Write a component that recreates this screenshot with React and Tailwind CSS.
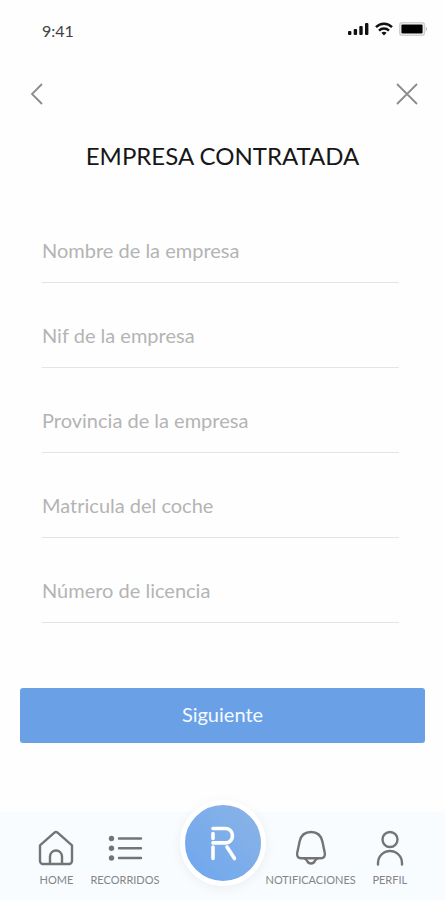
import React, { useState } from 'react';

const FIELDS = [
  { name: 'nombre', label: 'Nombre de la empresa' },
  { name: 'nif', label: 'Nif de la empresa' },
  { name: 'provincia', label: 'Provincia de la empresa' },
  { name: 'matricula', label: 'Matricula del coche' },
  { name: 'licencia', label: 'Número de licencia' },
];

function StatusBar() {
  return (
    <div className="flex h-[62px] items-center justify-between pr-[17px] pl-[42px]">
      <span className="text-base text-neutral-700">9:41</span>
      <div className="flex items-center gap-[6px] pb-1">
        {/* Signal */}
        <svg width="21" height="14" viewBox="0 0 21 14" fill="#111">
          <rect x="0" y="9" width="3.4" height="4" rx="1" />
          <rect x="5.7" y="7" width="3.4" height="6" rx="1" />
          <rect x="11.3" y="4" width="3.4" height="9" rx="1" />
          <rect x="17" y="1" width="3.4" height="12" rx="1" />
        </svg>
        {/* Wifi */}
        <svg width="18" height="14" viewBox="0 0 18 14" fill="none" stroke="#111" strokeWidth="2.4">
          <path d="M1 5.2C5.4 .6 12.6 .6 17 5.2" />
          <path d="M4 8.6c2.8-2.8 7.2-2.8 10 0" />
          <path d="M6.4 10.8c1.5-1.4 3.7-1.4 5.2 0L9 13.4z" fill="#111" stroke="none" />
        </svg>
        {/* Battery */}
        <svg width="29" height="14" viewBox="0 0 29 14">
          <rect x=".8" y=".8" width="24.6" height="12.4" rx="2.5" fill="#fff" stroke="#d0d0d0" strokeWidth="1.6" />
          <rect x="2.4" y="2.6" width="21.2" height="8.8" rx="1" fill="#000" />
          <path d="M26.8 4.8c1.6.6 1.6 3.8 0 4.4z" fill="#bdbdbd" />
        </svg>
      </div>
    </div>
  );
}

function HomeIcon() {
  return (
    <svg width="36" height="36" viewBox="0 0 36 36" fill="none" stroke="#747474" strokeWidth="2.4" strokeLinejoin="round">
      <path d="M2 15.4 16.4 2.6a2.4 2.4 0 0 1 3.2 0L34 15.4V31a3 3 0 0 1-3 3H5a3 3 0 0 1-3-3z" />
      <path d="M12 34v-7.5a6 6 0 0 1 12 0V34" />
    </svg>
  );
}

function ListIcon() {
  return (
    <svg width="36" height="36" viewBox="0 0 36 36" fill="#747474" stroke="#747474" strokeLinecap="round">
      <path d="M12 8.5h22M12 18.3h22M12 28h22" strokeWidth="2.4" />
      <circle cx="4.5" cy="8.5" r="2.7" stroke="none" />
      <circle cx="4.5" cy="18.3" r="2.7" stroke="none" />
      <circle cx="4.5" cy="28" r="2.7" stroke="none" />
    </svg>
  );
}

function BellIcon() {
  return (
    <svg width="36" height="36" viewBox="0 0 36 36" fill="none" stroke="#747474" strokeWidth="2.4" strokeLinejoin="round">
      <path d="M18 2C11.5 2 7.8 6 6.6 11.5L4.2 23C3.6 26 5 28.2 8 28.2h20c3 0 4.400-2.200 3.800-5.200L29.400 11.500C28.200 6 24.500 2 18 2z" />
      <path d="M11 28.200c2 .4 2.600 1.400 3.200 2.800 1.500 3.400 6.100 3.400 7.600 0 .6-1.400 1.200-2.400 3.200-2.800" />
    </svg>
  );
}

function ProfileIcon() {
  return (
    <svg width="36" height="36" viewBox="0 0 36 36" fill="none" stroke="#747474" strokeWidth="2.4" strokeLinecap="round">
      <circle cx="18" cy="9.5" r="7.5" />
      <path d="M6 34.5v-1.5a12 12 0 0 1 24 0v1.5" />
    </svg>
  );
}

function NavItem({ label, children }) {
  return (
    <a href="#" className="flex flex-col items-center gap-[6px] text-[11px] leading-4 text-[#858585]">
      {children}
      {label}
    </a>
  );
}

function BottomNav() {
  return (
    <nav className="mt-auto grid h-[88px] grid-cols-[1fr_86px_1fr] bg-[#f8fcff]">
      <div className="flex justify-end gap-4 pt-[18px] pr-5">
        <NavItem label="HOME"><HomeIcon /></NavItem>
        <NavItem label="RECORRIDOS"><ListIcon /></NavItem>
      </div>
      <button
        aria-label="R"
        className="-mt-3 flex size-[86px] items-center justify-center rounded-full border-[5px] border-white bg-linear-to-bl from-[#8db4e5] to-[#6ba6ef] bg-origin-border shadow-[0_2px_12px_rgba(0,0,0,0.06)]"
      >
        <svg width="28" height="36" viewBox="0 0 28 36" fill="none" stroke="#fff" strokeWidth="3.6" strokeLinecap="round">
          <path d="M4 3.5h13a6.5 7.2 0 0 1 0 14.4H4" />
          <path d="M4 8.5v5M4 22v11.5M18 22l7.500 11.500" />
        </svg>
      </button>
      <div className="flex gap-4 pt-[18px]">
        <NavItem label="NOTIFICACIONES"><BellIcon /></NavItem>
        <NavItem label="PERFIL"><ProfileIcon /></NavItem>
      </div>
    </nav>
  );
}

export default function App() {
  const [values, setValues] = useState({});

  const handleChange = (e) => {
    setValues({ ...values, [e.target.name]: e.target.value });
  };

  return (
    <div className="flex min-h-screen flex-col bg-[#fefefe] font-[Lato,sans-serif]">
      <StatusBar />

      {/* Header */}
      <header className="flex h-16 items-center justify-between px-[26px]">
        <button aria-label="Volver">
          <svg width="22" height="24" viewBox="0 0 22 24" fill="none" stroke="#8c8c8c" strokeWidth="1.8">
            <path d="M16 2 6 12l10 10" />
          </svg>
        </button>
        <button aria-label="Cerrar">
          <svg width="24" height="24" viewBox="0 0 24 24" fill="none" stroke="#8c8c8c" strokeWidth="1.8">
            <path d="M2 2l20 20M22 2 2 22" />
          </svg>
        </button>
      </header>

      <main>
        <h1 className="pt-4 text-center text-2xl leading-7 text-neutral-900">EMPRESA CONTRATADA</h1>

        <form onSubmit={(e) => e.preventDefault()}>
          <div className="mt-[28px] pr-[46px] pl-[42px]">
            {FIELDS.map(({ name, label }) => (
              <input
                key={name}
                name={name}
                aria-label={label}
                placeholder={label}
                value={values[name] || ''}
                onChange={handleChange}
                className="block h-[85px] w-full border-b border-[#e4e4e4] pt-5 text-xl text-neutral-700 placeholder:text-[#b4b4b4] focus:outline-none"
              />
            ))}
          </div>

          <div className="mt-[65px] mb-8 px-5">
            <button type="submit" className="h-[55px] w-full rounded-[3px] bg-[#6aa1e6] pb-1 text-xl text-[#f4f9ff]">
              Siguiente
            </button>
          </div>
        </form>
      </main>

      <BottomNav />
    </div>
  );
}
